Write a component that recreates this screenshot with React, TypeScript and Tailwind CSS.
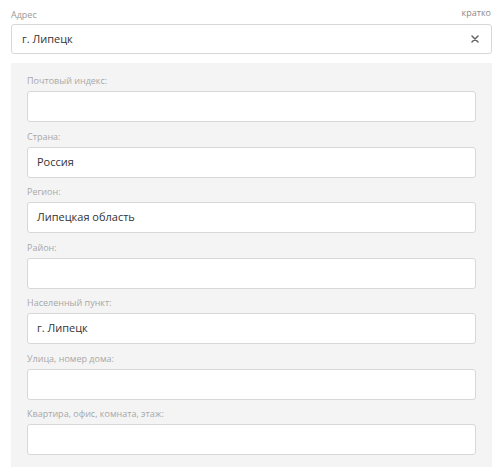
import React from 'react';

const FIELDS = [
  { label: 'Почтовый индекс:', value: '' },
  { label: 'Страна:', value: 'Россия' },
  { label: 'Регион:', value: 'Липецкая область' },
  { label: 'Район:', value: '' },
  { label: 'Населенный пункт:', value: 'г. Липецк' },
  { label: 'Улица, номер дома:', value: '' },
  { label: 'Квартира, офис, комната, этаж:', value: '' },
];

export default function App() {
  return (
    <div className="w-[500px] h-[470px] bg-white overflow-hidden font-['Open_Sans',sans-serif]">
      <div className="pl-[11px] pr-[8px] pt-[7px]">
        {/* Address header */}
        <div className="flex items-end justify-between h-[14px] mb-[3px]">
          <span className="text-[9px] leading-[12px] text-[#9a9a9a]">Адрес</span>
          <span className="text-[9px] leading-[12px] text-[#8a8a8a] mb-[2px] mr-[1px]">кратко</span>
        </div>
        <div className="flex items-center h-[30px] w-[481px] border border-[#d6d9dc] rounded-[3px] bg-white pl-[10px] pr-[12px]">
          <span className="flex-1 text-[11px] text-[#333]">г. Липецк</span>
          <svg className="w-[8px] h-[8px]" viewBox="0 0 8 8">
            <path d="M1 1l6 6M7 1L1 7" stroke="#666" strokeWidth={1.5} strokeLinecap="round" />
          </svg>
        </div>

        {/* Details panel */}
        <div className="mt-[9px] w-[481px] h-[404px] bg-[#f4f4f4] pt-[12px] pl-[16px] pr-[16px] flex flex-col gap-[8.5px]">
          {FIELDS.map((field) => (
            <div key={field.label}>
              <div className="text-[9px] leading-[12px] text-[#a8a8a8] mb-[4px]">{field.label}</div>
              <div className="h-[31px] w-full bg-white border border-[#d6d9dc] rounded-[3px] flex items-center pl-[9px] text-[11px] text-[#333]">
                {field.value}
              </div>
            </div>
          ))}
        </div>
      </div>
    </div>
  );
}
